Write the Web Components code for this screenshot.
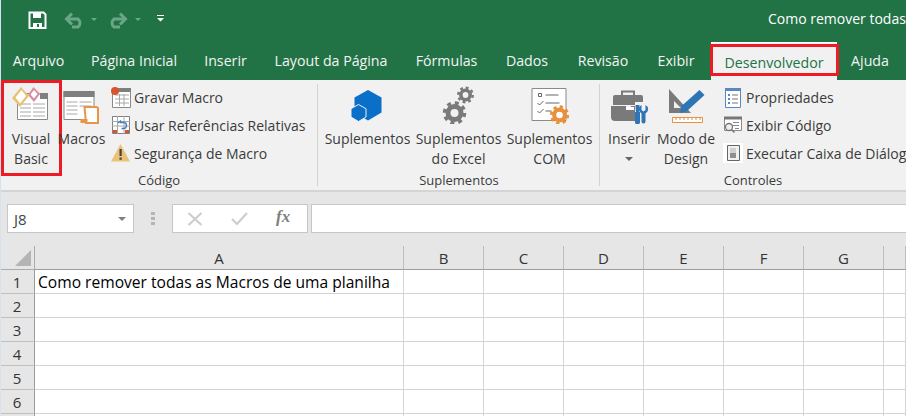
<!DOCTYPE html>
<html lang="pt">
<head>
<meta charset="utf-8">
<title>Excel</title>
<style>
  html, body { margin: 0; height: 100%; overflow: hidden; background: #fff; }
  body { font-family: "Open Sans", "Noto Sans", sans-serif; font-size: 14px; }
  svg { display: block; }
</style>
</head>
<body>
<xl-window>
  <xl-titlebar title-text="Como remover todas">
    <svg slot="qat" width="170" height="38" viewBox="0 0 170 38">
      <path d="M29.500 12.500h14l2 2v13.500h-16z" fill="none" stroke="#fff" stroke-width="2"/>
      <path d="M33 13h8v5h-8zM33 23h9v5h-9z" fill="#fff"/><path d="M37 24h2v3h-2z" fill="#217346"/>
      <g fill="none" stroke="#6aa585" stroke-width="3">
        <path d="M68 19h10a5 5 0 0 1 0 8h-6"/><path d="M72 13.500l-5.500 5.500 5.500 5.500"/>
        <path d="M124 19h-10a5 5 0 0 0 0 8h6"/><path d="M120 13.500l5.500 5.500-5.500 5.500"/>
      </g>
      <path d="M91 18h6l-3 3zM135 18h6l-3 3z" fill="#6aa585"/>
      <path d="M157 15h7v1h-7zM157 18h7l-3.500 3.500z" fill="#fff"/>
    </svg>
  </xl-titlebar>

  <xl-tabs>
    <xl-tab>Arquivo</xl-tab>
    <xl-tab>Página Inicial</xl-tab>
    <xl-tab>Inserir</xl-tab>
    <xl-tab>Layout da Página</xl-tab>
    <xl-tab>Fórmulas</xl-tab>
    <xl-tab>Dados</xl-tab>
    <xl-tab>Revisão</xl-tab>
    <xl-tab>Exibir</xl-tab>
    <xl-tab active marked>Desenvolvedor</xl-tab>
    <xl-tab>Ajuda</xl-tab>
  </xl-tabs>

  <xl-ribbon>
    <xl-group label="Código" width="318" sep>
      <xl-big-btn width="54" marked>
        <svg slot="icon" width="48" height="40" viewBox="7 84 48 40">
          <path d="M17.500 93.500h30v26h-30z" fill="#fff" stroke="#8a8a8a"/>
          <path d="M40 93h8v6h-8z" fill="#808080"/>
          <path d="M20 104h11M33 104h12M20 108h11M33 108h12M20 112h11M33 112h12M20 116h11M33 116h12" stroke="#a8a8a8"/>
          <path d="M21 87l8 9-9 11-8-9z" fill="#e9c177"/>
          <path d="M21.500 90l4.500 6-6 7.500-4.500-6z" fill="#fff"/>
          <path d="M33.500 87l6.500 7-6 8-6-7z" fill="#dc8b9c"/>
          <path d="M34 90l3.500 4-3.500 4.500-3.500-4z" fill="#fff"/>
        </svg>
        Visual<br>Basic
      </xl-big-btn>
      <xl-big-btn width="47">
        <svg slot="icon" width="48" height="40" viewBox="57.500 84 48 40">
          <path d="M63.500 91.500h30v28h-30z" fill="#fff" stroke="#8a8a8a"/>
          <path d="M63 91h31v6h-31z" fill="#7f7f7f"/>
          <path d="M66 102h11M79 102h12M66 106h11M79 106h12M66 110h11M66 114h11" stroke="#a8a8a8"/>
          <path d="M84 107h12l1.500 1v15h-12z" fill="#fff" stroke="#e8954a" stroke-width="2"/>
          <path d="M80 119h7v4h-7z" fill="#e8954a"/>
        </svg>
        Macros
      </xl-big-btn>
      <xl-small-col>
        <xl-small-btn>
          <svg slot="icon" width="24" height="24" viewBox="110 85 24 24">
            <path d="M112.500 89.500h18v18h-18z" fill="#fff" stroke="#8a8a8a"/>
            <path d="M113 88h18v4h-18z" fill="#7f7f7f"/>
            <path d="M115 95h14M115 99h14M115 103h14M119.500 94v12M124 94v12" stroke="#a8a8a8"/>
            <circle cx="115" cy="91" r="4" fill="#d9532b"/>
          </svg>
          Gravar Macro
        </xl-small-btn>
        <xl-small-btn>
          <svg slot="icon" width="24" height="24" viewBox="110 113 24 24">
            <path d="M112.500 116.500h17v17h-17z" fill="#fff" stroke="#7f7f7f"/>
            <path d="M112 121.500h18M112 126h18M117.500 116v18M124 116v18" stroke="#a8a8a8"/>
            <path d="M113 130h4v3h-4zM125 130h4v3h-4z" fill="#d9532b"/>
            <path d="M118 123l2.500-2v1.500h3a3 3 0 0 1 0 6h-2" fill="none" stroke="#3f7fc4" stroke-width="1.300"/>
          </svg>
          Usar Referências Relativas
        </xl-small-btn>
        <xl-small-btn>
          <svg slot="icon" width="24" height="24" viewBox="110 141 24 24">
            <path d="M120.500 144l9.500 17.500h-19z" fill="#ebc27a"/>
            <path d="M119.500 149h2.200v7h-2.200zM119.500 157.500h2.200v2.300h-2.200z" fill="#444"/>
          </svg>
          Segurança de Macro
        </xl-small-btn>
      </xl-small-col>
    </xl-group>

    <xl-group label="Suplementos" width="282" sep>
      <xl-big-btn width="91">
        <svg slot="icon" width="48" height="40" viewBox="343.500 84 48 40">
          <path d="M367.500 90l13.500 7.500v15l-13.500 8-13.500-8v-15z" fill="#0a6fc9"/>
          <path d="M358 104.500l7.500 4.200v8.300l-7.500 4.500-7.500-4.500v-8.300z" fill="#0a6fc9" stroke="#f1f1f1"/>
        </svg>
        Suplementos
      </xl-big-btn>
      <xl-big-btn width="91">
        <svg slot="icon" width="48" height="40" viewBox="434.500 84 48 40">
          <use href="#gear" x="454" y="113" color="#7a7a7a"/>
          <use href="#gear" transform="translate(465 95) scale(.72)" color="#7a7a7a"/>
        </svg>
        Suplementos<br>do Excel
      </xl-big-btn>
      <xl-big-btn width="91">
        <svg slot="icon" width="48" height="40" viewBox="525.500 84 48 40">
          <path d="M531.500 88.500h34v32h-34z" fill="#fff" stroke="#8a8a8a"/>
          <path d="M538 93.500h3v3h-3z" fill="none" stroke="#666"/>
          <path d="M545 95h13M545 103h14M545 111h6" stroke="#666"/>
          <path d="M537 103l2 2 4-4M537 111l2 2 4-4" fill="none" stroke="#666"/>
          <use href="#gear" transform="translate(559 115) scale(.82)" color="#e8903c"/>
        </svg>
        Suplementos<br>COM
      </xl-big-btn>
    </xl-group>

    <xl-group label="Controles" width="306">
      <xl-big-btn width="50">
        <svg slot="icon" width="48" height="40" viewBox="605 84 48 40">
          <path d="M622 97v-5.500h12v5.500" fill="none" stroke="#7a7a7a" stroke-width="2"/>
          <path d="M613 97a2 2 0 0 1 2-2h20v10h-22z" fill="#7a7a7a"/>
          <path d="M635 95h6a2 2 0 0 1 2 2v5h-8z" fill="#7a7a7a"/>
          <path d="M611 106h15v4h5v-4h4v15h-20a4 4 0 0 1-4-4z" fill="#7a7a7a"/>
          <path d="M626 107h8v3h-8z" fill="#fff"/>
          <path d="M635.500 104h4l-.500 7h1v10a2 2 0 0 1-5 0v-10h1z" fill="#2e75b6" transform="translate(0 1)"/>
          <path d="M641.500 105v5l2 1.500 2-1.500v-5a5 5 0 0 1 2 6.500l-2 2v8a1.500 1.500 0 0 1-4 0v-8l-2-2a5 5 0 0 1 2-6.500z" fill="#2e75b6"/>
        </svg>
        Inserir
        <svg slot="below" width="8" height="4" viewBox="0 0 8 4"><path d="M0 0h8l-4 4z" fill="#666"/></svg>
      </xl-big-btn>
      <xl-big-btn width="64">
        <svg slot="icon" width="48" height="40" viewBox="662 84 48 40">
          <path d="M669 89l22 24h-22zM674 101v7h7z" fill="#7a7a7a" fill-rule="evenodd"/>
          <path d="M680 113l1.500-7 18-16 5 5-17.500 16z" fill="#2e75b6"/>
          <path d="M672.500 117.500h30v5h-30z" fill="#fff" stroke="#e8903c"/>
          <path d="M676 118v2M680 118v2M684 118v2M688 118v2M692 118v2M696 118v2M700 118v2" stroke="#e8903c"/>
        </svg>
        Modo de<br>Design
      </xl-big-btn>
      <xl-small-col left="4">
        <xl-small-btn>
          <svg slot="icon" width="24" height="24" viewBox="722 85 24 24">
            <path d="M725.500 88.500h15v19h-15z" fill="#fff" stroke="#5b87c0"/>
            <path d="M725 88h16v3h-16z" fill="#5b87c0"/>
            <path d="M728 94h2v2h-2zM728 98h2v2h-2zM728 102h2v2h-2z" fill="#5b87c0"/>
            <path d="M732 95h6M732 99h6M732 103h6" stroke="#777"/>
          </svg>
          Propriedades
        </xl-small-btn>
        <xl-small-btn>
          <svg slot="icon" width="24" height="24" viewBox="722 113 24 24">
            <path d="M724.500 117.500h17v13h-17z" fill="#fff" stroke="#8a8a8a"/>
            <path d="M724 116.500h18v3h-18z" fill="#777"/>
            <path d="M733 122.500h6M733 125.500h6M735 128.500h4" stroke="#888"/>
            <circle cx="729" cy="127" r="3.500" fill="#f1f1f1" stroke="#777" stroke-width="1.300"/>
            <path d="M731.500 129.500l3 3" stroke="#777" stroke-width="1.500"/>
          </svg>
          Exibir Código
        </xl-small-btn>
        <xl-small-btn>
          <svg slot="icon" width="24" height="24" viewBox="722 141 24 24">
            <path d="M723 143h20v20h-20z" fill="#fff"/>
            <path d="M727.500 145.500h12v15h-12z" fill="#f1f1f1" stroke="#666"/>
            <path d="M730 148h6v5h-6z" fill="#d0d0d0"/><path d="M730 153h6v5h-6z" fill="#8f8f8f"/>
          </svg>
          Executar Caixa de Diálogo
        </xl-small-btn>
      </xl-small-col>
    </xl-group>
  </xl-ribbon>

  <xl-formula-bar name="J8"></xl-formula-bar>
  <xl-sheet></xl-sheet>
</xl-window>

<svg width="0" height="0" style="position:absolute">
  <symbol id="gear" overflow="visible" width="1" height="1">
    <g fill="none" stroke="currentColor">
      <circle r="6.500" stroke-width="5"/>
      <circle r="10" stroke-width="3.500" stroke-dasharray="3.927 3.927"/>
    </g>
  </symbol>
</svg>

<script>
// window column: bars on top, sheet takes what is left
class XlWindow extends HTMLElement {
  constructor () {
    super();
    this.attachShadow({mode: 'open'}).innerHTML = `
      <style>
      :host {
        display: flex;
        flex-direction: column;
        position: relative;
        width: 906px;
        height: 416px;
        overflow: hidden;
        box-sizing: border-box;
        color: #3b3b3b;
      }
      /* light window edge lies over the bars */
      :host::after {
        content: "";
        position: absolute;
        left: 0;
        top: 0;
        bottom: 0;
        width: 1px;
        background: #d7e2f0;
      }
      </style>
      <slot></slot>`;
  }
}

class XlTitlebar extends HTMLElement {
  constructor () {
    super();
    this.attachShadow({mode: 'open'}).innerHTML = `
      <style>
      :host {
        display: flex;
        align-items: center;
        height: 38px;
        flex: none;
        background: #217346;
        color: #fff;
        white-space: nowrap;
        overflow: hidden;
      }
      #title {
        margin-left: 598px;
        padding-bottom: 2px;
        font-size: 14px;
      }
      </style>
      <slot name="qat"></slot>
      <span id="title"></span>`;
    this.shadowRoot.getElementById('title').textContent = this.getAttribute('title-text');
  }
}

class XlTabs extends HTMLElement {
  constructor () {
    super();
    this.attachShadow({mode: 'open'}).innerHTML = `
      <style>
      :host {
        display: grid;
        grid-template-columns: 77px 114px 69px 142px 89px 72px 80px 66px 128px 66px;
        height: 42px;
        flex: none;
        background: #217346;
      }
      </style>
      <slot></slot>`;
  }
}

class XlTab extends HTMLElement {
  constructor () {
    super();
    this.attachShadow({mode: 'open'}).innerHTML = `
      <style>
      :host {
        display: flex;
        align-items: center;
        justify-content: center;
        position: relative;
        color: #f4f4f4;
        font-size: 14.200px;
        padding-top: 2px;
        white-space: nowrap;
      }
      :host([active]) {
        background: #f1f1f1;
        color: #217346;
        border-top: 1px solid #fff;
        padding-top: 1px;
        margin: 4px 0 0 2px;
      }
      :host([marked])::after {
        content: "";
        position: absolute;
        inset: 1px -2px 4px -1px;
        border: 3px solid #ed1c24;
      }
      </style>
      <slot></slot>`;
  }
}

class XlRibbon extends HTMLElement {
  constructor () {
    super();
    this.attachShadow({mode: 'open'}).innerHTML = `
      <style>
      :host {
        display: flex;
        height: 110px;
        flex: none;
        background: #f1f1f1;
        border-bottom: 2px solid #d4d4d4;
        overflow: hidden;
      }
      </style>
      <slot></slot>`;
  }
}

class XlGroup extends HTMLElement {
  constructor () {
    super();
    this.attachShadow({mode: 'open'}).innerHTML = `
      <style>
      :host {
        display: flex;
        flex-direction: column;
        flex: none;
        box-sizing: border-box;
        position: relative;
        padding: 3px 0 0 4px;
      }
      :host([sep])::after {
        content: "";
        position: absolute;
        right: 0;
        top: 4px;
        bottom: 4px;
        width: 1px;
        background: #d2d2d2;
      }
      #items { display: flex; height: 88px; }
      #label {
        text-align: center;
        font-size: 13px;
        line-height: 18px;
        margin-left: -4px;
      }
      </style>
      <div id="items"><slot></slot></div>
      <div id="label"></div>`;
    this.shadowRoot.getElementById('label').textContent = this.getAttribute('label');
    this.style.width = this.getAttribute('width') + 'px';
  }
}

class XlBigBtn extends HTMLElement {
  constructor () {
    super();
    this.attachShadow({mode: 'open'}).innerHTML = `
      <style>
      :host {
        display: flex;
        flex-direction: column;
        align-items: center;
        flex: none;
        position: relative;
        text-align: center;
        line-height: 20px;
        white-space: nowrap;
      }
      #icon { flex: none; height: 43px; padding-top: 1px; box-sizing: border-box; margin-bottom: 3px; }
      #label { flex: none; }
      #below { flex: none; display: flex; margin-top: 8px; }
      :host([marked])::after {
        content: "";
        position: absolute;
        left: -3px;
        right: -4px;
        top: -3px;
        height: 96px;
        border: 3px solid #ed1c24;
        box-sizing: border-box;
      }
      </style>
      <div id="icon"><slot name="icon"></slot></div>
      <div id="label"><slot></slot></div>
      <div id="below"><slot name="below"></slot></div>`;
    this.style.width = this.getAttribute('width') + 'px';
  }
}

class XlSmallCol extends HTMLElement {
  constructor () {
    super();
    this.attachShadow({mode: 'open'}).innerHTML = `
      <style>
      :host {
        display: flex;
        flex-direction: column;
        padding-left: 5px;
      }
      </style>
      <slot></slot>`;
    if (this.hasAttribute('left')) this.style.paddingLeft = this.getAttribute('left') + 'px';
  }
}

class XlSmallBtn extends HTMLElement {
  constructor () {
    super();
    this.attachShadow({mode: 'open'}).innerHTML = `
      <style>
      :host {
        display: flex;
        align-items: center;
        height: 28px;
        white-space: nowrap;
      }
      </style>
      <slot name="icon"></slot>
      <span><slot></slot></span>`;
  }
}

class XlFormulaBar extends HTMLElement {
  constructor () {
    super();
    this.attachShadow({mode: 'open'}).innerHTML = `
      <style>
      :host {
        display: flex;
        align-items: center;
        height: 54px;
        flex: none;
        box-sizing: border-box;
        padding: 0 0 1px 7px;
        background: #e6e6e6;
      }
      .box {
        height: 29px;
        box-sizing: border-box;
        background: #fff;
        border: 1px solid #c6c6c6;
        display: flex;
        align-items: center;
      }
      #name {
        width: 127px;
        padding: 0 7px 0 6px;
        justify-content: space-between;
        font-size: 15px;
        color: #444;
      }
      #grip { width: 4px; height: 13px; margin: 0 17px 0 17px;
        background: repeating-linear-gradient(#b5b5b5 0 3px, transparent 3px 5px); }
      #fx { width: 136px; position: relative; }
      #fx i {
        position: absolute;
        left: 103px;
        top: 2px;
        font: italic bold 17px "Liberation Serif", serif;
        color: #7f7f7f;
      }
      #input { flex: 1; margin-left: 3px; border-right: 0; }
      </style>
      <div class="box" id="name"><span id="ref"></span>
        <svg width="8" height="4" viewBox="0 0 8 4"><path d="M0 0h8l-4 4z" fill="#808080"/></svg>
      </div>
      <div id="grip"></div>
      <div class="box" id="fx">
        <svg width="90" height="27" viewBox="0 0 90 27" fill="none" stroke="#cdcdcd" stroke-width="2.200">
          <path d="M15.500 8l13 12M28.500 8l-13 12"/>
          <path d="M59 14l5 5 10-11"/>
        </svg>
        <i>fx</i>
      </div>
      <div class="box" id="input"></div>`;
    this.shadowRoot.getElementById('ref').textContent = this.getAttribute('name');
  }
}

// sheet grid, cells are generated
class XlSheet extends HTMLElement {
  constructor () {
    super();
    const cols = ['A', 'B', 'C', 'D', 'E', 'F', 'G', ''];
    let cells = '<div class="corner"><b></b></div>';
    cells += cols.map(c => `<div class="ch">${c}</div>`).join('');
    for (let r = 1; r <= 7; r++) {
      cells += `<div class="rh">${r === 7 ? '' : r}</div>`;
      cells += cols.map((c, i) => `<div class="c">${r === 1 && i === 0 ? 'Como remover todas as Macros de uma planilha' : ''}</div>`).join('');
    }
    this.attachShadow({mode: 'open'}).innerHTML = `
      <style>
      :host {
        display: grid;
        grid-template-columns: 35px 369px repeat(6, 80px) 1fr;
        grid-auto-rows: 24px;
        flex: 1;
        overflow: hidden;
        background: #fff;
        min-height: 0;
      }
      .corner, .ch, .rh {
        background: #e6e6e6;
        box-sizing: border-box;
        color: #333;
        display: flex;
        align-items: center;
        justify-content: center;
        font-size: 15px;
      }
      .corner { border-right: 1px solid #ababab; border-bottom: 1px solid #ababab; position: relative; }
      .corner b {
        position: absolute;
        left: 15px;
        top: 4px;
        width: 16px;
        height: 16px;
        background: #b4b4b4;
        clip-path: polygon(100% 0, 100% 100%, 0 100%);
      }
      .ch { border-right: 1px solid #bfbfbf; border-bottom: 1px solid #9b9b9b; }
      .rh { border-right: 1px solid #9b9b9b; border-bottom: 1px solid #bfbfbf; }
      .c {
        box-sizing: border-box;
        border-right: 1px solid #d4d4d4;
        border-bottom: 1px solid #d4d4d4;
        padding-left: 3px;
        font-size: 15.600px;
        line-height: 24px;
        color: #000;
        white-space: nowrap;
      }
      </style>${cells}`;
  }
}

customElements.define('xl-window', XlWindow);
customElements.define('xl-titlebar', XlTitlebar);
customElements.define('xl-tabs', XlTabs);
customElements.define('xl-tab', XlTab);
customElements.define('xl-ribbon', XlRibbon);
customElements.define('xl-group', XlGroup);
customElements.define('xl-big-btn', XlBigBtn);
customElements.define('xl-small-col', XlSmallCol);
customElements.define('xl-small-btn', XlSmallBtn);
customElements.define('xl-formula-bar', XlFormulaBar);
customElements.define('xl-sheet', XlSheet);
</script>
</body>
</html>
